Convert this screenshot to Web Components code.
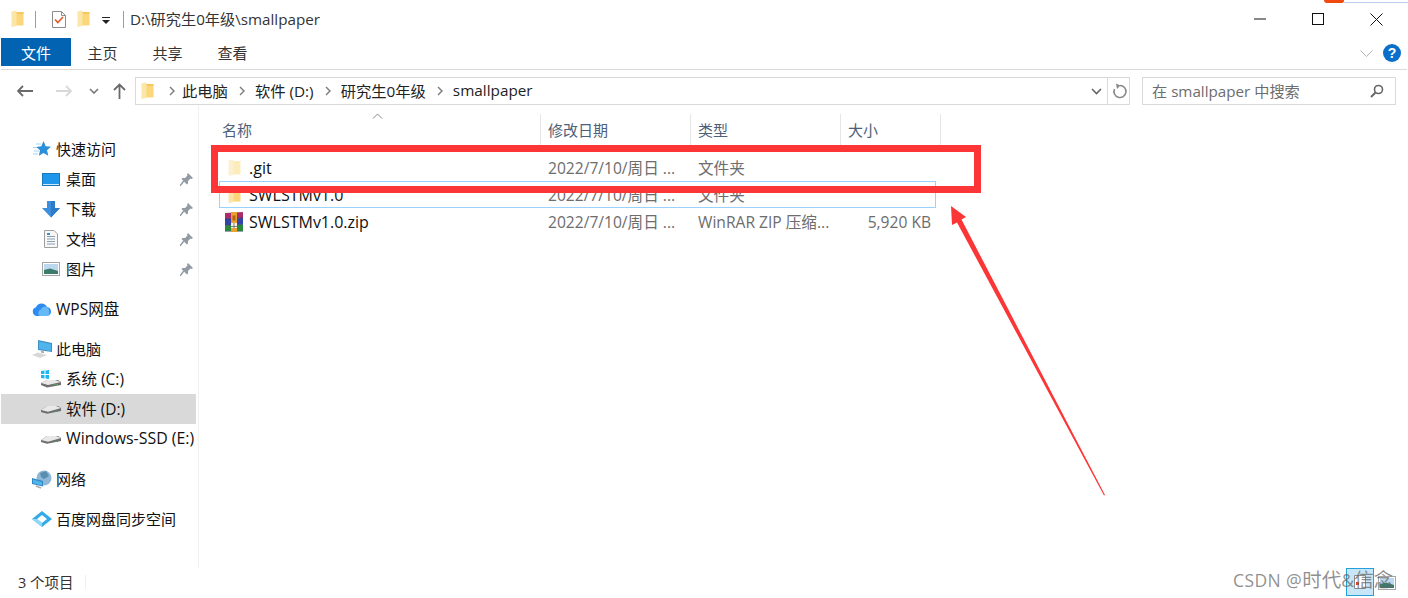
<!DOCTYPE html>
<html lang="zh"><head><meta charset="utf-8"><title>smallpaper</title>
<style>
html,body{margin:0;padding:0;background:#fff}
body{width:1408px;height:598px;overflow:hidden;position:relative;font:15px "Open Sans","Noto Sans CJK SC",sans-serif;color:#1a1a1a}
</style></head><body>
<explorer-window>
  <title-bar path="D:\研究生0年级\smallpaper"></title-bar>
  <ribbon-tabs></ribbon-tabs>
  <address-row></address-row>
  <main-area>
    <nav-pane>
      <nav-item icon="star" level="0" style="margin-top:29px">快速访问</nav-item>
      <nav-item icon="desktop" level="1" pin>桌面</nav-item>
      <nav-item icon="download" level="1" pin>下载</nav-item>
      <nav-item icon="doc" level="1" pin>文档</nav-item>
      <nav-item icon="pic" level="1" pin>图片</nav-item>
      <nav-item icon="cloud" level="0" style="margin-top:10px;font-size:15.500px">WPS网盘</nav-item>
      <nav-item icon="pc" level="0" style="margin-top:10px">此电脑</nav-item>
      <nav-item icon="winDrive" level="1" style="font-size:15.500px">系统 (C:)</nav-item>
      <nav-item icon="drive" level="1" selected style="font-size:15.400px">软件 (D:)</nav-item>
      <nav-item icon="drive" level="1" style="font-size:15.900px">Windows-SSD (E:)</nav-item>
      <nav-item icon="net" level="0" style="margin-top:10px">网络</nav-item>
      <nav-item icon="baidu" level="0" style="margin-top:10px">百度网盘同步空间</nav-item>
    </nav-pane>
    <file-list>
      <file-row icon="folderPale" name=".git" date="2022/7/10/周日 ..." type="文件夹"></file-row>
      <file-row icon="folder" name="SWLSTMv1.0" date="2022/7/10/周日 ..." type="文件夹" focused></file-row>
      <file-row icon="rar" name="SWLSTMv1.0.zip" date="2022/7/10/周日 ..." type="WinRAR ZIP 压缩..." size="5,920 KB"></file-row>
    </file-list>
  </main-area>
  <status-bar>3 个项目</status-bar>
</explorer-window>
<annotation-layer></annotation-layer>
<script>
const ICONS={
folder:'<svg width="13" height="18" viewBox="0 0 13 18"><path d="M5 2H12.500V15.500H5Z" fill="#fcd67a"/><path d="M5 2H12.500V4H5Z" fill="#f4c95f"/><path d="M.5 1.500 5.500 .5V16L.5 17Z" fill="#fbe6a8"/></svg>',
folderPale:'<svg width="13" height="18" viewBox="0 0 13 18"><path d="M5 2H12.500V15.500H5Z" fill="#fcecbd"/><path d="M.5 1.500 5.500 .5V16L.5 17Z" fill="#fbf1d0"/></svg>',
check:'<svg width="16" height="19" viewBox="0 0 16 19"><path d="M1.500 1.500H10.500L14.500 5.500V17.500H1.500Z" fill="#fff" stroke="#8c8c8c"/><path d="M10.500 1.500V5.500H14.500" fill="none" stroke="#8c8c8c"/><path d="M4 9.500 6.800 12.500 12 7" fill="none" stroke="#e8562a" stroke-width="1.600"/></svg>',
star:'<svg width="18" height="16" viewBox="0 0 18 16"><path d="M10.500 0 12.700 5.200 18 5.700 14 9.200 15.300 14.800 10.500 11.900 5.800 14.800 7 9.200 3.200 6 8.300 5.200Z" fill="#2b90d9"/><path d="M3 3h5M0 6.500h4M1 10h5M0 13h5" stroke="#a9d3f0"/></svg>',
desktop:'<svg width="18" height="13" viewBox="0 0 18 13"><rect x=".5" y=".5" width="17" height="12" fill="#1e96ea" stroke="#1878b8"/><path d="M1 11.500h16" stroke="#cfe9fb"/></svg>',
download:'<svg width="18" height="17" viewBox="0 0 18 17"><path d="M5 0H13V7H18L9 16.500 0 7H5Z" fill="#3d8fde"/><path d="M9 0H13V7H18L9 16.500Z" fill="#2c7cc9"/></svg>',
doc:'<svg width="14" height="18" viewBox="0 0 14 18"><path d="M.5.500H10L13.500 4V17.500H.5Z" fill="#f7f7f7" stroke="#a0a0a0"/><path d="M3 6.500h8M3 9h8M3 11.500h8M3 14h8" stroke="#8aa0b4"/><path d="M3 3h3v2H3z" fill="#3c8fd0"/></svg>',
pic:'<svg width="18" height="14" viewBox="0 0 18 14"><rect x=".5" y=".5" width="17" height="13" fill="#fff" stroke="#a5a5a5"/><rect x="2" y="2" width="14" height="10" fill="#bcd8ee"/><path d="M2 8 8 6.500 16 9V12H2Z" fill="#3c7a6c"/></svg>',
cloud:'<svg width="20" height="13" viewBox="0 0 20 13"><path d="M5 13A4.500 4.500 0 0 1 4 4.200 6 6 0 0 1 15 4 4.600 4.600 0 0 1 15.500 13Z" fill="#2d8cf0"/><path d="M8 13A3.500 3.500 0 0 1 9 6.500 4 4 0 0 1 17 9 3 3 0 0 1 15.500 13Z" fill="#67b8f6"/></svg>',
pc:'<svg width="20" height="19" viewBox="0 0 20 19"><path d="M6 0 20 3V12L6 10Z" fill="#3f8fc4"/><path d="M7 1.500 19 4V11L7 9Z" fill="#4fb4ec"/><path d="M0 15 6 12.500 15 15 8 18Z" fill="#d8d8d8"/><path d="M9 11 12 11.500V13L9 12.500Z" fill="#999"/></svg>',
winDrive:'<svg width="20" height="18" viewBox="0 0 20 18"><path d="M0 13 6 10H17L20 12V15L6 17.500 0 15Z" fill="#6e6e6e"/><path d="M0 13 7 15 20 12 14 10H6Z" fill="#e8e8e8"/><path d="M13 14.500h4" stroke="#4fa05a"/><path d="M0 1 3.500.5V4H0zM4.500.4 8 0V4H4.500zM0 5H3.500V8.500L0 8zM4.500 5H8V9L4.500 8.500z" fill="#1eb4ee"/></svg>',
drive:'<svg width="20" height="10" viewBox="0 0 20 10"><path d="M0 6 6 2H17L20 4V7L6 9.800 0 8Z" fill="#6e6e6e"/><path d="M0 6 7 7.800 20 4 15 2H6Z" fill="#e8e8e8"/><path d="M14 7.500h3" stroke="#4fa05a"/></svg>',
net:'<svg width="20" height="19" viewBox="0 0 20 19"><circle cx="12" cy="8" r="7.500" fill="#8fb8d8"/><path d="M8 3 14 1 17 6 12 9 9 7Z" fill="#5b8db0"/><path d="M0 8 11 11V16.500L0 14Z" fill="#2f87c4"/><path d="M1 9.500 10 12V15.500L1 13.300Z" fill="#4fb4ec"/><path d="M4 16 9 18" stroke="#aaa" stroke-width="1.500"/></svg>',
baidu:'<svg width="20" height="16" viewBox="0 0 20 16"><path d="M10 0 20 8 10 16 0 8Z" fill="#34a9e8"/><path d="M10 4 15 8 10 12 5 8Z" fill="#fff"/><path d="M0 8 5 8 10 12 10 16Z" fill="#8fd9f5"/></svg>',
rar:'<svg width="20" height="20" viewBox="0 0 20 20"><path d="M1 1 19 0V6L1 7Z" fill="#a82d6a"/><path d="M1 7 19 6V12.500L1 13.500Z" fill="#3345a8"/><path d="M1 13.500 19 12.500V19H1Z" fill="#2a8a3c"/><path d="M1 7 19 6M1 13.500 19 12.500M1 19.500H19" stroke="#1b1b3a" stroke-opacity=".6" stroke-width=".7"/><rect x="7" y="0" width="6" height="20" fill="#eaa22e"/><rect x="7" y="11" width="6" height="5" fill="#f4f0e4"/><rect x="8.500" y="3.500" width="3" height="5" fill="#b8621a"/><path d="M7 14.500h6M10 11v5" stroke="#555" stroke-width=".7"/></svg>',
pin:'<svg width="13" height="13" viewBox="0 0 13 13"><path d="M8 0 13 5 11.500 6 10.500 5.500 8 8 8 10.500 7 11.500 1.500 6 2.500 5 5 5 7.500 2.500 7 1.500Z" fill="#929aa3"/><path d="M0 13 3.800 8" stroke="#929aa3" stroke-width="1.400"/></svg>'
};
function def(name,css,html){
  customElements.define(name,class extends HTMLElement{
    connectedCallback(){
      if(this.shadowRoot)return;
      const r=this.attachShadow({mode:'open'});
      r.innerHTML='<style>'+css+'</style>'+(typeof html==='function'?html(this):html);
    }
  });
}
def('explorer-window',`:host{display:flex;flex-direction:column;width:1408px;height:598px}`,`<slot></slot>`);
def('title-bar',`
:host{display:flex;align-items:center;height:38px;flex:none;position:relative;font-size:15.200px}
.i{display:flex;flex:none}
.sep{width:1px;height:17px;background:#9c9c9c;flex:none}
.t{margin-left:6px;color:#333;position:relative;top:-1px}
.ctl{margin-left:auto;display:flex;align-items:center;padding-right:25px;gap:46px}
.ctl svg{display:block}
.blob{position:absolute;left:1324px;top:0;width:20px;height:3px;background:#f0490f;border-radius:0 0 6px 8px}
.line{position:absolute;left:1344px;top:2px;width:64px;height:1px;background:#bcd0ee}
`,h=>`<span class="i" style="margin-left:11px">${ICONS.folder}</span>
<span class="sep" style="margin-left:11px"></span>
<span class="i" style="margin-left:15px">${ICONS.check}</span>
<span class="i" style="margin-left:10px">${ICONS.folder}</span>
<svg class="i" style="margin-left:12px;margin-top:3px" width="8" height="7" viewBox="0 0 8 7"><path d="M0 0h8v1H0zM0 3h8L4 7z" fill="#222"/></svg>
<span class="sep" style="margin-left:13px"></span>
<span class="t">${h.getAttribute('path')}</span>
<span class="ctl">
<svg width="12" height="12" viewBox="0 0 12 12"><path d="M0 6h12" stroke="#111"/></svg>
<svg width="12" height="12" viewBox="0 0 12 12"><rect x=".5" y=".5" width="11" height="11" fill="none" stroke="#111"/></svg>
<svg width="13" height="13" viewBox="0 0 13 13"><path d="M.5.500l12 12M12.500.5l-12 12" stroke="#111"/></svg>
</span><span class="blob"></span><span class="line"></span>`);
def('ribbon-tabs',`
:host{display:flex;height:32px;flex:none;margin:0 1px;border-bottom:1px solid #dadada;box-sizing:border-box;font-size:15px;color:#333}
.f{width:70px;height:28px;background:#0263b2;color:#fff;display:flex;align-items:center;justify-content:center}
.t{width:65px;text-align:center;height:30px;line-height:30px}
.right{margin-left:auto;display:flex;align-items:center;gap:10px;padding:0 6px 0 0;height:30px}
.help{width:18px;height:18px;border-radius:50%;background:#0a6fc9;color:#fff;font:bold 14px/18px "Liberation Sans",sans-serif;text-align:center}
`,`<span class="f">文件</span><span class="t" style="margin-left:-1px">主页</span><span class="t">共享</span><span class="t">查看</span>
<span class="right"><svg width="13" height="7" viewBox="0 0 13 7"><path d="M.5.500l6 6 6-6" fill="none" stroke="#b5b5b5"/></svg><span class="help">?</span></span>`);
const chev='<svg width="6" height="10" viewBox="0 0 6 10"><path d="M1 1l4 4-4 4" fill="none" stroke="#7a7a7a" stroke-width="1.400"/></svg>';
def('address-row',`
:host{display:flex;align-items:center;height:28px;flex:none;margin-top:7px;font-size:15.300px;color:#222}
svg{display:block;flex:none}
.bar{margin-left:9px;width:995px;height:28px;box-sizing:border-box;border:1px solid #d9d9d9;display:flex;align-items:center;flex:none}
.c{margin:0 10px 0 11px;display:flex}
.x{position:relative;top:-1px}
.right{margin-left:auto;display:flex;align-items:center;height:100%}
.s{margin-left:12px;width:254px;height:28px;box-sizing:border-box;border:1px solid #d9d9d9;display:flex;align-items:center;padding:0 11px 0 9px;color:#6d6d6d;font-size:15.200px;flex:none}
.s svg{margin-left:auto}
`,`<svg style="margin-left:17px" width="16" height="12" viewBox="0 0 16 12"><path d="M6 1 1 6l5 5M1 6h15" fill="none" stroke="#6a6a6a" stroke-width="1.800"/></svg>
<svg style="margin-left:23px" width="16" height="12" viewBox="0 0 16 12"><path d="M10 1l5 5-5 5M15 6H0" fill="none" stroke="#d8d8d8" stroke-width="1.800"/></svg>
<svg style="margin-left:17px" width="10" height="6" viewBox="0 0 10 6"><path d="M1 1l4 4 4-4" fill="none" stroke="#777" stroke-width="1.600"/></svg>
<svg style="margin-left:14px" width="13" height="16" viewBox="0 0 13 16"><path d="M1 7l5.500-5.500L12 7M6.500 2V16" fill="none" stroke="#6a6a6a" stroke-width="1.800"/></svg>
<div class="bar"><span style="margin-left:5px;display:flex">${ICONS.folder}</span>
<span class="c" style="margin-left:15px;margin-right:7px">${chev}</span><span class="x">此电脑</span><span class="c">${chev}</span><span class="x">软件 (D:)</span><span class="c">${chev}</span><span class="x">研究生0年级</span><span class="c">${chev}</span><span class="x">smallpaper</span>
<span class="right"><svg width="11" height="7" viewBox="0 0 11 7"><path d="M1 1l4.500 4.500L10 1" fill="none" stroke="#666" stroke-width="1.600"/></svg>
<span style="width:1px;height:100%;background:#d9d9d9;margin:0 0 0 5px"></span>
<svg style="margin:0 1px 0 3px" width="17" height="17" viewBox="0 0 17 17"><path d="M9 2.500A6 6 0 1 1 3.500 6" fill="none" stroke="#8a8a8a" stroke-width="1.600"/><path d="M5 .5 9.500 2.500 6 6Z" fill="#8a8a8a"/></svg></span></div>
<div class="s"><span class="x">在 smallpaper 中搜索</span><svg width="14" height="14" viewBox="0 0 14 14"><circle cx="8.500" cy="5.500" r="4" fill="none" stroke="#666" stroke-width="1.600"/><path d="M5.500 8.500 1 13" stroke="#666" stroke-width="2"/></svg></div>`);
def('main-area',`:host{display:flex;flex:1;min-height:0}`,`<slot></slot>`);
def('nav-pane',`:host{display:flex;flex-direction:column;width:199px;flex:none;box-sizing:border-box;border-right:1px solid #f0f0f0;height:463px}`,`<slot></slot>`);
def('nav-item',`
:host{display:flex;align-items:center;height:30px;flex:none;width:195px;margin-left:1px;position:relative;color:#111}
:host([selected]){background:#d9d9d9}
.ic{position:absolute;top:0;bottom:0;display:flex;align-items:center;justify-content:center;width:20px}
.p{position:absolute;left:179px;top:9px;display:flex}
.tx{white-space:nowrap;position:relative;top:-1px}
`,h=>{const l=+h.getAttribute('level');const left=l?40:31;return `<span class="ic" style="left:${left}px">${ICONS[h.getAttribute('icon')]}</span><span class="tx" style="margin-left:${l?65:55}px"><slot></slot></span>${h.hasAttribute('pin')?`<span class="p">${ICONS.pin}</span>`:''}`});
def('file-list',`
:host{display:block;flex:1;position:relative}
.h{display:flex;height:32px;margin-top:9px;margin-left:16px;color:#4c607a;font-size:15px;position:relative}
.h span{box-sizing:border-box;padding-left:7px;border-right:1px solid #e6e6e6;line-height:32px}
.sort{position:absolute;left:157px;top:-1px}
.rows{margin-top:8px}
`,`<div class="h"><span style="width:326px">名称</span><span style="width:150px">修改日期</span><span style="width:150px">类型</span><span style="width:100px">大小</span>
<svg class="sort" width="11" height="6" viewBox="0 0 11 6"><path d="M1 5.500 5.500 1 10 5.500" fill="none" stroke="#8a8a8a"/></svg></div>
<div class="rows"><slot></slot></div>`);
def('file-row',`
:host{display:flex;align-items:center;height:27px;margin-left:20px;width:717px;box-sizing:border-box;position:relative;white-space:nowrap;color:#6d6d6d;font-size:15.600px}
:host([focused]){box-shadow:inset 0 0 0 1px #99d1ff}
.ic{width:20px;margin-left:5px;display:flex;justify-content:center;flex:none}
.n{width:299px;margin-left:5px;color:#111;flex:none;font-size:16px}
.d{width:150px;flex:none}.t{width:150px;flex:none}
.s{width:83px;text-align:right;flex:none}
`,h=>`<span class="ic">${ICONS[h.getAttribute('icon')]}</span><span class="n">${h.getAttribute('name')}</span><span class="d">${h.getAttribute('date')}</span><span class="t">${h.getAttribute('type')}</span><span class="s">${h.getAttribute('size')||''}</span>`);
def('status-bar',`
:host{display:flex;align-items:center;height:27px;padding-bottom:3px;flex:none;padding-left:18px;font-size:14.500px;color:#333;position:relative}
.sep{width:1px;height:14px;background:#eee;margin-left:11px}
.v{position:absolute;left:1346px;top:0;width:28px;height:28px;box-sizing:border-box;background:#c7e6f8;border:1px solid #26a0da;display:flex;align-items:center;justify-content:center}
.w{position:absolute;left:1378px;top:8px;display:flex}
`,`<slot></slot><span class="sep"></span>
<span class="v"><svg width="12" height="14" viewBox="0 0 12 14"><path d="M.5.500H11.500V13.500H.5Z" fill="#fff" stroke="#8a8a8a"/><rect x="2" y="7" width="3" height="3" fill="#d8402a"/></svg></span>
<span class="w">${ICONS.pic}</span>`);
def('annotation-layer',`
:host{position:absolute;left:0;top:0;width:1408px;height:598px;display:block;pointer-events:none}
.box{position:absolute;left:211px;top:145px;width:770px;height:48px;box-sizing:border-box;border:7px solid #fc3636}
svg{position:absolute;left:0;top:0}
.wm{position:absolute;left:1233px;top:568px;font:17.500px/24px "Open Sans","Noto Sans CJK SC",sans-serif;letter-spacing:.4px;color:rgba(100,100,100,.72);white-space:nowrap}
.wm b{font-weight:400;font-size:19.500px;letter-spacing:0}
`,`<div class="box"></div>
<svg width="1408" height="598" viewBox="0 0 1408 598"><path d="M951 206 966 217 961.500 219.500 1105 495 1104 495.500 957 222.500 952 225Z" fill="#fc3636"/></svg>
<div class="wm">CSDN @<b>时代</b>&amp;<b>信念</b></div>`);
</script>
</body></html>
